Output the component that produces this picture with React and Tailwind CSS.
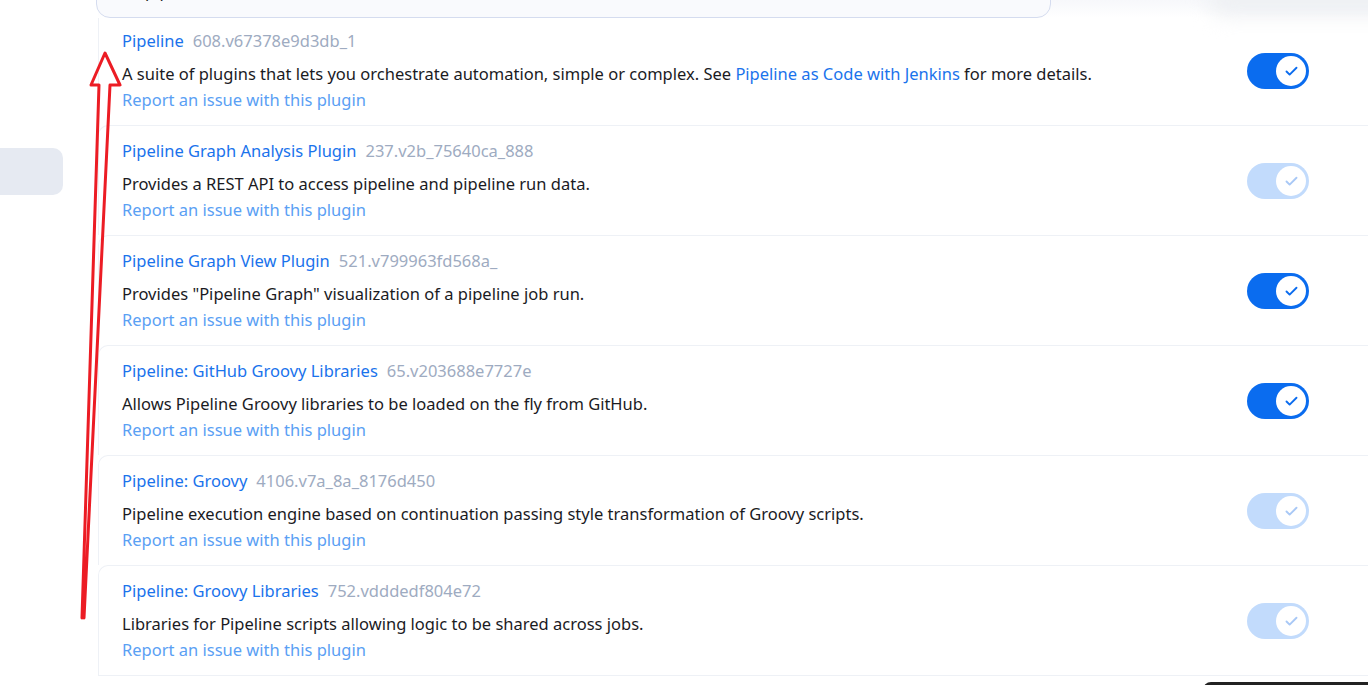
import { Check } from 'lucide-react';

const plugins = [
  {
    name: 'Pipeline',
    version: '608.v67378e9d3db_1',
    desc: (
      <>
        A suite of plugins that lets you orchestrate automation, simple or complex. See{' '}
        <a className="text-[#1a73ec]">Pipeline as Code with Jenkins</a> for more details.
      </>
    ),
    enabled: true,
  },
  { name: 'Pipeline Graph Analysis Plugin', version: '237.v2b_75640ca_888', desc: 'Provides a REST API to access pipeline and pipeline run data.', enabled: false },
  { name: 'Pipeline Graph View Plugin', version: '521.v799963fd568a_', desc: 'Provides "Pipeline Graph" visualization of a pipeline job run.', enabled: true },
  { name: 'Pipeline: GitHub Groovy Libraries', version: '65.v203688e7727e', desc: 'Allows Pipeline Groovy libraries to be loaded on the fly from GitHub.', enabled: true },
  { name: 'Pipeline: Groovy', version: '4106.v7a_8a_8176d450', desc: 'Pipeline execution engine based on continuation passing style transformation of Groovy scripts.', enabled: false },
  { name: 'Pipeline: Groovy Libraries', version: '752.vdddedf804e72', desc: 'Libraries for Pipeline scripts allowing logic to be shared across jobs.', enabled: false },
];

function Toggle({ on }) {
  return (
    <div className={`w-[62px] h-[36px] rounded-full flex items-center justify-end pr-[3px] ${on ? 'bg-[#0a6cef]' : 'bg-[#c2dbfc]'}`}>
      <div className="w-[30px] h-[30px] rounded-full bg-white flex items-center justify-center">
        <Check size={15} strokeWidth={3} className={on ? 'text-[#0a6cef]' : 'text-[#a8c8f6]'} />
      </div>
    </div>
  );
}

function PluginRow({ p, first }) {
  return (
    <div className={`flex bg-white border-l border-[#eef1f6] ${first ? 'h-[107px] pt-[11px]' : 'h-[110px] pt-[13px] border-t rounded-tl-[10px]'}`}>
      <div className="flex-1 pl-[23px]">
        <div className="leading-6">
          <a className="text-[#1a73ec]">{p.name}</a>
          <span className="ml-[9px] text-[#9eabc1]">{p.version}</span>
        </div>
        <div className="mt-[9px] leading-6 text-[#1b1b1f]">{p.desc}</div>
        <div className="mt-[2px] leading-6 text-[#5aa0f4]">Report an issue with this plugin</div>
      </div>
      <div className={`pr-[79px] ${first ? 'pt-[24px]' : 'pt-[24px]'}`}>
        <Toggle on={p.enabled} />
      </div>
    </div>
  );
}

export default function App() {
  return (
    <div className="relative w-[1368px] h-[685px] overflow-hidden bg-white text-[16.5px]" style={{ fontFamily: '"Noto Sans", "Open Sans", sans-serif' }}>
      <div className="flex h-full">
        {/* sidebar */}
        <div className="w-[98px] shrink-0 pt-[148px]">
          <div className="w-[63px] h-[47px] rounded-r-[10px] bg-[#e6eaf2]" />
        </div>

        {/* main */}
        <div className="flex-1 flex flex-col">
          <div className="relative bg-gradient-to-b from-[#f7f8fb] to-white">
            <div className="w-[955px] h-[48px] -mt-[30px] -ml-[2px] rounded-[14px] border border-[#d5dcef] bg-[#f9fafd] flex items-center pl-[48px] pr-[16px]">
              <span className="text-[#222] -mt-[6px]">pipeline</span>
              <div className="ml-auto w-[26px] h-[22px] -mt-[16px] rounded-[6px] border border-[#d5dcef]" />
            </div>
          </div>
          <div className="flex flex-col mr-[-20px]">
            {plugins.map((p, i) => (
              <PluginRow key={p.name} p={p} first={i === 0} />
            ))}
            <div className="h-[10px] border-t border-[#eef1f6] bg-white" />
          </div>
        </div>
      </div>

      {/* top-right shadow */}
      <div className="absolute top-[-20px] right-[-40px] w-[200px] h-[36px] rounded-full bg-[#eef0f3] blur-[10px]" />

      {/* dark toast edge */}
      <div className="absolute top-[682px] left-[1203px] w-[200px] h-[20px] rounded-t-[8px] bg-[#222]" />

      {/* red annotation arrow */}
      <svg className="absolute left-0 top-0 pointer-events-none" width="200" height="685">
        <path d="M82 618 L99 85 L91 85 L105 53 L120 85 L110 85 L84 618" fill="none" stroke="#ec1c24" strokeWidth="3" strokeLinejoin="round" strokeLinecap="round" />
      </svg>
    </div>
  );
}
